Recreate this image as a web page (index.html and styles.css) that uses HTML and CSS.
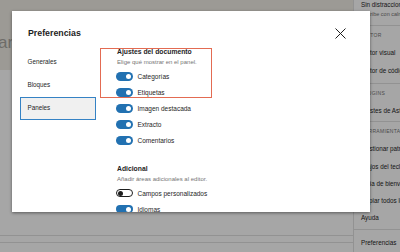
FILE: index.html
```html
<!DOCTYPE html>
<html lang="es">
<head>
<meta charset="utf-8">
<title>Preferencias</title>
<link rel="stylesheet" href="styles.css">
</head>
<body>
<div class="editor">
  <div class="topbar"><span class="bg-title">ar</span></div>
  <div class="canvas">
    <div class="footer-lines"><div class="fline"></div><div class="fline"></div></div>
  </div>
</div>

<div class="menu">
  <div class="mgroup g1">
    <div class="mitem strong">Sin distracciones</div>
    <div class="mdesc">Escribe con calma</div>
  </div>
  <div class="mgroup g2">
    <div class="mlabel">EDITOR</div>
    <div class="mitem">Editor visual</div>
    <div class="mitem">Editor de código</div>
  </div>
  <div class="mgroup g3">
    <div class="mlabel">PLUGINS</div>
    <div class="mitem">Ajustes de Astra</div>
  </div>
  <div class="mgroup g4">
    <div class="mlabel">HERRAMIENTAS</div>
    <div class="mitem short">Gestionar patrones</div>
    <div class="mitem short">Atajos del teclado</div>
    <div class="mitem short">Guía de bienvenida</div>
    <div class="mitem short">Copiar todos los bloques</div>
    <div class="mitem short">Ayuda</div>
  </div>
  <div class="mgroup g5">
    <div class="mitem">Preferencias</div>
  </div>
</div>

<div class="overlay"></div>

<div class="modal">
  <div class="modal-header">
    <h1 class="modal-title">Preferencias</h1>
    <span class="close">
      <svg width="11" height="11" viewBox="0 0 11 11"><path d="M0.5 0.5 L10.5 10.5 M10.5 0.5 L0.5 10.5" stroke="#1e1e1e" stroke-width="1" fill="none"/></svg>
    </span>
  </div>
  <div class="modal-body">
    <nav class="tabs">
      <div class="tab">Generales</div>
      <div class="tab">Bloques</div>
      <div class="tab active">Paneles</div>
    </nav>
    <div class="panel">
      <section class="section">
        <h2 class="sec-title">Ajustes del documento</h2>
        <p class="sec-desc">Elige qué mostrar en el panel.</p>
        <div class="rows">
          <div class="row"><span class="toggle on"></span><span class="label">Categorías</span></div>
          <div class="row"><span class="toggle on"></span><span class="label">Etiquetas</span></div>
          <div class="row"><span class="toggle on"></span><span class="label">Imagen destacada</span></div>
          <div class="row"><span class="toggle on"></span><span class="label">Extracto</span></div>
          <div class="row"><span class="toggle on"></span><span class="label">Comentarios</span></div>
        </div>
      </section>
      <section class="section second">
        <h2 class="sec-title">Adicional</h2>
        <p class="sec-desc">Añadir áreas adicionales al editor.</p>
        <div class="rows">
          <div class="row"><span class="toggle off"></span><span class="label">Campos personalizados</span></div>
          <div class="row"><span class="toggle on"></span><span class="label">Idiomas</span></div>
        </div>
      </section>
    </div>
  </div>
  <div class="highlight"></div>
</div>
</body>
</html>
```

FILE: styles.css
```css
* { box-sizing: border-box; }
html, body { margin: 0; padding: 0; }
body {
  width: 400px;
  height: 252px;
  overflow: hidden;
  position: relative;
  font-family: "Liberation Sans", Arial, sans-serif;
  color: #1e1e1e;
  background: #ffffff;
}

/* underlying editor */
.editor {
  display: flex;
  flex-direction: column;
  height: 252px;
}
.topbar {
  height: 70px;
  background: #f0ede5;
  padding-top: 33px;
}
.bg-title {
  display: block;
  margin-left: -2px;
  font-size: 17px;
  line-height: 20px;
  color: #a9a7a1;
}
.canvas {
  flex: 1;
  background: #ffffff;
  display: flex;
  flex-direction: column;
  justify-content: flex-end;
}
.footer-lines {
  height: 17px;
  display: flex;
  flex-direction: column;
  gap: 6px;
}
.fline {
  height: 1px;
  width: 353px;
  background: #e0e0e0;
}

/* dropdown menu */
.menu {
  position: absolute;
  top: 0;
  left: 353px;
  width: 60px;
  height: 252px;
  background: #ffffff;
  border-left: 1px solid #e0e0e0;
  display: flex;
  flex-direction: column;
  white-space: nowrap;
  overflow: hidden;
}
.mgroup { border-bottom: 1px solid #e0e0e0; padding-left: 7px; }
.mgroup.g5 { border-bottom: none; padding-top: 4px; }
.g1 { height: 26px; padding-top: 1px; }
.g2 { height: 58px; }
.g3 { height: 39px; }
.g4 { height: 108px; }
.mitem {
  height: 18px;
  line-height: 18px;
  font-size: 6.3px;
  color: #1e1e1e;
}
.mitem.short { height: 17.2px; line-height: 17.2px; }
.mitem.strong { height: 8px; line-height: 8px; }
.mdesc {
  margin-top: 1px;
  height: 8px;
  line-height: 8px;
  font-size: 5.5px;
  color: #757575;
}
.mlabel {
  height: 18px;
  line-height: 18px;
  font-size: 5px;
  letter-spacing: 0.3px;
  color: #757575;
}

.overlay {
  position: absolute;
  inset: 0;
  background: rgba(0, 0, 0, 0.35);
}

/* modal */
.modal {
  position: absolute;
  left: 12px;
  top: 11px;
  width: 358px;
  height: 201px;
  background: #ffffff;
  overflow: hidden;
  box-shadow: 0 1px 3px rgba(0, 0, 0, 0.45);
}
.modal-header {
  height: 36px;
  padding: 8px 24px 0 16px;
  display: flex;
  align-items: center;
  justify-content: space-between;
}
.modal-title {
  margin: 0;
  font-size: 8.8px;
  font-weight: 700;
  line-height: 28px;
  color: #1e1e1e;
}
.close { display: flex; width: 11px; height: 11px; }

.modal-body { display: flex; }
.tabs {
  width: 76px;
  margin-left: 8px;
  padding-top: 4px;
  display: flex;
  flex-direction: column;
}
.tab {
  height: 23px;
  line-height: 20px;
  padding-left: 6.5px;
  border: 1.5px solid transparent;
  font-size: 6.3px;
  color: #1e1e1e;
}
.tab.active {
  background: #f0f0f0;
  border-color: #3582c4;
}
.panel {
  margin-left: 21px;
  display: flex;
  flex-direction: column;
}
.section.second { margin-top: 15px; }
.sec-title {
  margin: 0;
  height: 10px;
  line-height: 10px;
  font-size: 6.8px;
  font-weight: 700;
  color: #1e1e1e;
}
.sec-desc {
  margin: 0 0 1.5px;
  height: 10px;
  line-height: 10px;
  font-size: 6px;
  color: #757575;
}
.rows { display: flex; flex-direction: column; }
.row {
  height: 16px;
  display: flex;
  align-items: center;
  gap: 5px;
  margin-left: -1.5px;
}
.label { font-size: 6.5px; color: #1e1e1e; }
.toggle {
  position: relative;
  width: 17px;
  height: 8.5px;
  border-radius: 5px;
  flex: none;
}
.toggle.on { background: #2271b1; }
.toggle.off { background: #ffffff; border: 1px solid #1e1e1e; }
.toggle::after {
  content: "";
  position: absolute;
  top: 50%;
  width: 5px;
  height: 5px;
  margin-top: -2.5px;
  border-radius: 50%;
}
.toggle.on::after { right: 2px; background: #ffffff; }
.toggle.off::after { left: 1px; background: #1e1e1e; }

.highlight {
  position: absolute;
  left: 88px;
  top: 36.5px;
  width: 112px;
  height: 50px;
  border: 1px solid #e36b52;
  pointer-events: none;
}
```
